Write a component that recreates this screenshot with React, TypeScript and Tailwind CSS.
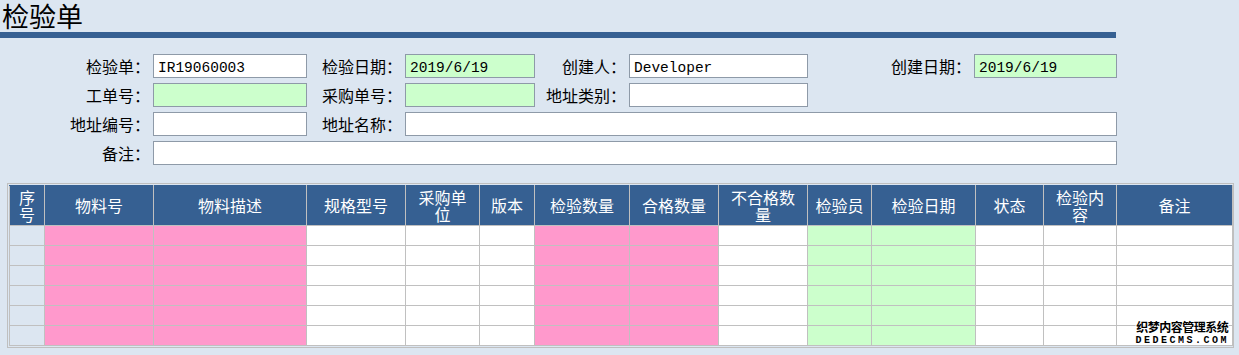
import React from 'react';

const cjk = '"Noto Sans CJK SC", "Liberation Sans", sans-serif';
const mono = '"Liberation Mono", "Noto Sans CJK SC", monospace';

type FieldProps = {
  value?: string;
  tone?: 'white' | 'green';
  span?: string;
};

function Field({ value = '', tone = 'white', span = '' }: FieldProps) {
  return (
    <div
      className={`h-[24px] border border-[#8e9aa8] pl-[4px] pt-[3px] flex items-center text-[14.5px] leading-[16px] text-black ${
        tone === 'green' ? 'bg-[#ccffcc]' : 'bg-white'
      } ${span}`}
      style={{ fontFamily: mono }}
    >
      {value}
    </div>
  );
}

function Label({ text }: { text: string }) {
  return (
    <div className="h-[24px] flex items-center justify-end text-[16px] leading-[18px] text-black whitespace-nowrap">
      {text}：
    </div>
  );
}

const columns = [
  { title: '序号', width: 35 },
  { title: '物料号', width: 109 },
  { title: '物料描述', width: 153 },
  { title: '规格型号', width: 99 },
  { title: '采购单位', width: 74 },
  { title: '版本', width: 55 },
  { title: '检验数量', width: 95 },
  { title: '合格数量', width: 89 },
  { title: '不合格数量', width: 89 },
  { title: '检验员', width: 64 },
  { title: '检验日期', width: 104 },
  { title: '状态', width: 68 },
  { title: '检验内容', width: 73 },
  { title: '备注', width: 116 },
];

// background per column for the empty body rows
const cellTone = [
  'bg-[#dce6f1]',
  'bg-[#ff99cc]',
  'bg-[#ff99cc]',
  'bg-white',
  'bg-white',
  'bg-white',
  'bg-[#ff99cc]',
  'bg-[#ff99cc]',
  'bg-white',
  'bg-[#ccffcc]',
  'bg-[#ccffcc]',
  'bg-white',
  'bg-white',
  'bg-white',
];

export default function App() {
  const rows = [0, 1, 2, 3, 4, 5];

  return (
    <div className="relative w-[1239px] h-[355px] bg-[#dce6f1] overflow-hidden" style={{ fontFamily: cjk }}>
      {/* title */}
      <h1 className="pl-[2px] text-[27px] leading-[32px] text-black font-normal">检验单</h1>
      <div className="h-[6px] w-[1116px] bg-[#366092]" />

      {/* header form */}
      <div className="mt-[16px] grid grid-cols-[150px_154px_92px_130px_88px_179px_160px_143px] gap-x-[3px] gap-y-[5px] w-[1117px]">
        <Label text="检验单" />
        <Field value="IR19060003" />
        <Label text="检验日期" />
        <Field value="2019/6/19" tone="green" />
        <Label text="创建人" />
        <Field value="Developer" />
        <Label text="创建日期" />
        <Field value="2019/6/19" tone="green" />

        <Label text="工单号" />
        <Field tone="green" />
        <Label text="采购单号" />
        <Field tone="green" />
        <Label text="地址类别" />
        <Field />
        <div />
        <div />

        <Label text="地址编号" />
        <Field />
        <Label text="地址名称" />
        <Field span="col-span-5" />

        <Label text="备注" />
        <Field span="col-span-7" />
      </div>

      {/* detail grid */}
      <div className="mt-[18px] ml-[7px] w-[1227px] border border-[#bfbfbf] p-px">
        <table className="w-full table-fixed border-collapse">
          <colgroup>
            {columns.map((c) => (
              <col key={c.title} style={{ width: c.width }} />
            ))}
          </colgroup>
          <thead>
            <tr>
              {columns.map((c) => (
                <th
                  key={c.title}
                  className="h-[40px] px-[6px] bg-[#366092] border border-[#c0c0c0] border-t-[#366092] text-white text-[16px] leading-[17px] font-normal text-center align-middle"
                >
                  {c.title}
                </th>
              ))}
            </tr>
          </thead>
          <tbody>
            {rows.map((r) => (
              <tr key={r}>
                {columns.map((c, i) => (
                  <td key={c.title} className={`h-[20px] p-0 border border-[#c0c0c0] ${cellTone[i]}`} />
                ))}
              </tr>
            ))}
          </tbody>
        </table>
      </div>

      {/* watermark */}
      <div className="absolute right-[10px] bottom-[9px] flex flex-col items-center text-black font-bold leading-none [text-shadow:1px_0_#fff,-1px_0_#fff,0_1px_#fff,0_-1px_#fff]">
        <span className="text-[12px] tracking-[-0.5px]">织梦内容管理系统</span>
        <span className="mt-[3px] text-[10px] tracking-[2.5px]" style={{ fontFamily: mono }}>
          DEDECMS.COM
        </span>
      </div>
    </div>
  );
}
